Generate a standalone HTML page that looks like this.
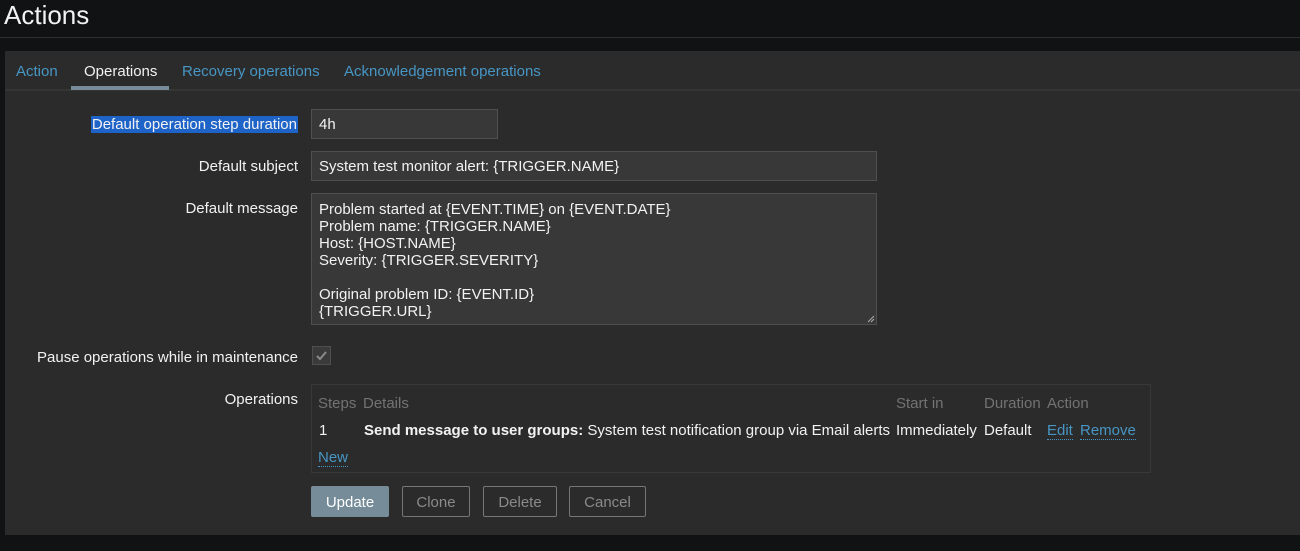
<!DOCTYPE html>
<html><head><style>
*{margin:0;padding:0;box-sizing:border-box}
body{width:1300px;height:551px;background:#111214;font-family:"Liberation Sans",Arial,sans-serif;font-size:15px;color:#f2f2f2;position:relative;overflow:hidden}
.a{position:absolute;white-space:nowrap}
.lbl{position:absolute;right:1002px;white-space:nowrap;color:#f2f2f2}
.inp{position:absolute;background:#383838;border:1px solid #4f4f4f;padding-left:7px;color:#f2f2f2}
.lnk{color:#4796c4}
.dl{border-bottom:1px dotted #4796c4;line-height:16px}
.btn{position:absolute;top:486px;height:31px;border:1px solid #767676;border-radius:2px;color:#8a8a8a;text-align:center;line-height:31px}
</style></head><body>
<div class="a" style="left:4px;top:0;font-size:26px;line-height:30px;color:#f2f2f2">Actions</div>
<div class="a" style="left:0;top:37px;width:1300px;height:1px;background:#2f2f2f"></div>
<div class="a" style="left:5px;top:51px;width:1295px;height:484px;background:#2b2b2b"></div>
<div class="a" style="left:5px;top:89px;width:1295px;height:2px;background:#353535"></div>
<div class="a lnk" style="left:16px;top:63px">Action</div>
<div class="a" style="left:84px;top:63px">Operations</div>
<div class="a" style="left:71px;top:86px;width:98px;height:4px;background:#768d99"></div>
<div class="a lnk" style="left:182px;top:63px">Recovery operations</div>
<div class="a lnk" style="left:344px;top:63px">Acknowledgement operations</div>

<div class="lbl" style="top:116px;background:#1e63c8;padding:0 1px">Default operation step duration</div>
<div class="inp" style="left:311px;top:109px;width:187px;height:30px;line-height:30px">4h</div>
<div class="lbl" style="top:158px">Default subject</div>
<div class="inp" style="left:311px;top:151px;width:566px;height:30px;line-height:30px">System test monitor alert: {TRIGGER.NAME}</div>
<div class="lbl" style="top:200px">Default message</div>
<div class="inp" style="left:311px;top:193px;width:566px;height:132px;line-height:17px;padding-top:7px;white-space:pre">Problem started at {EVENT.TIME} on {EVENT.DATE}
Problem name: {TRIGGER.NAME}
Host: {HOST.NAME}
Severity: {TRIGGER.SEVERITY}

Original problem ID: {EVENT.ID}
{TRIGGER.URL}<svg style="position:absolute;right:1px;bottom:1px" width="8" height="8"><path d="M7 1L1 7M7 4L4 7" stroke="#aaa" stroke-width="1"/></svg></div>
<div class="lbl" style="top:349px">Pause operations while in maintenance</div>
<div class="a" style="left:312px;top:346px;width:19px;height:19px;background:#3a3a3a;border:1px solid #4f4f4f"><svg width="17" height="17"><path d="M4 9l3 3 6-7" stroke="#8a8a8a" stroke-width="2" fill="none"/></svg></div>
<div class="lbl" style="top:391px">Operations</div>
<div class="a" style="left:311px;top:384px;width:840px;height:89px;border:1px solid #383838"></div>
<div class="a" style="left:318px;top:395px;color:#737373">Steps</div>
<div class="a" style="left:363px;top:395px;color:#737373">Details</div>
<div class="a" style="left:896px;top:395px;color:#737373">Start in</div>
<div class="a" style="left:984px;top:395px;color:#737373">Duration</div>
<div class="a" style="left:1047px;top:395px;color:#737373">Action</div>
<div class="a" style="left:319px;top:422px">1</div>
<div class="a" style="left:364px;top:422px"><b>Send message to user groups:</b> System test notification group via Email alerts</div>
<div class="a" style="left:896px;top:422px">Immediately</div>
<div class="a" style="left:984px;top:422px">Default</div>
<div class="a lnk dl" style="left:1047px;top:423px">Edit</div>
<div class="a lnk dl" style="left:1080px;top:423px">Remove</div>
<div class="a lnk dl" style="left:318px;top:450px">New</div>
<div class="btn" style="left:311px;width:78px;background:#768d99;border-color:#768d99;color:#fff">Update</div>
<div class="btn" style="left:402px;width:68px">Clone</div>
<div class="btn" style="left:483px;width:74px">Delete</div>
<div class="btn" style="left:569px;width:77px">Cancel</div>
</body></html>
